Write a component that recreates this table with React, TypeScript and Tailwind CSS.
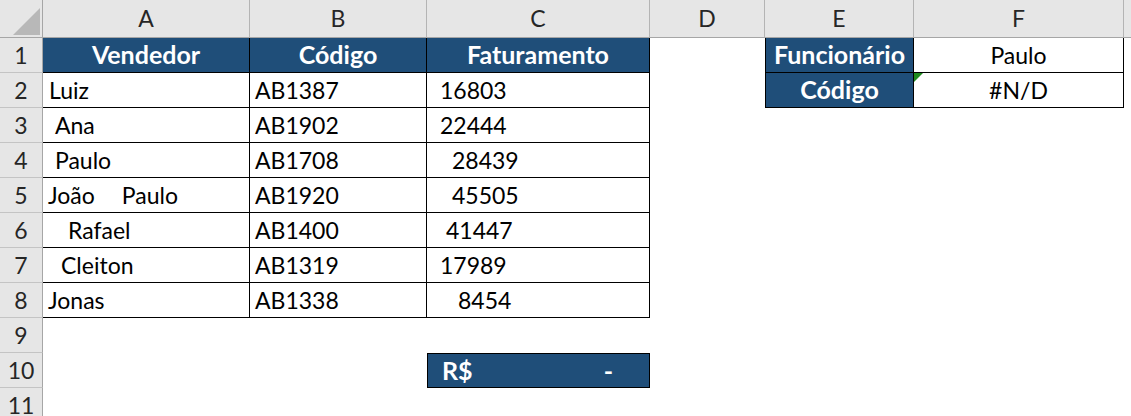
import React from 'react';

const FONT = "font-['Lato',_'Open_Sans',_sans-serif]";

const sellers = [
    { name: 'Luiz', namePad: 'pl-[6px]', code: 'AB1387', value: '16803', valuePad: 'pl-[13px]' },
    { name: 'Ana', namePad: 'pl-[12px]', code: 'AB1902', value: '22444', valuePad: 'pl-[13px]' },
    { name: 'Paulo', namePad: 'pl-[12px]', code: 'AB1708', value: '28439', valuePad: 'pl-[25px]' },
    { name: 'João Paulo', namePad: 'pl-[5px]', code: 'AB1920', value: '45505', valuePad: 'pl-[25px]' },
    { name: 'Rafael', namePad: 'pl-[25px]', code: 'AB1400', value: '41447', valuePad: 'pl-[19px]' },
    { name: 'Cleiton', namePad: 'pl-[18px]', code: 'AB1319', value: '17989', valuePad: 'pl-[13px]' },
    { name: 'Jonas', namePad: 'pl-[5px]', code: 'AB1338', value: '8454', valuePad: 'pl-[31px]' },
];

const letters = ['A', 'B', 'C', 'D', 'E', 'F'];

/** Gray column header strip cell */
function ColHead({ label }: { label: string }) {
    return (
        <div className="flex items-center justify-center bg-[#e6e6e6] border-b border-b-[#a6a6a6] border-r border-r-[#b4b4b4] text-[23px] text-[#262626]">
            {label}
        </div>
    );
}

/** Row number on the left */
function RowHead({ n }: { n: number }) {
    return (
        <div className="flex items-center justify-center bg-[#e6e6e6] border-r border-r-[#a6a6a6] border-b border-b-[#c4c4c4] text-[23px] text-[#262626]">
            {n}
        </div>
    );
}

function Blank() {
    return <div />;
}

const headCell = 'flex items-center justify-center bg-[#1f4e79] border-r border-b border-black text-[25px] font-bold text-white';

export default function App() {
    return (
        <div className={`w-[1131px] h-[416px] overflow-hidden bg-white ${FONT}`}>
            <div className="grid grid-cols-[43px_207px_177px_223px_115px_149px_210px_1fr] grid-rows-[38px_repeat(11,35px)]">

                {/* Column header strip */}
                <div className="relative bg-[#e6e6e6] border-b border-b-[#a6a6a6] border-r border-r-[#a6a6a6]">
                    <svg className="absolute left-[13px] top-[8px]" width="27" height="27" viewBox="0 0 27 27">
                        <polygon points="27,0 27,27 0,27" fill="#b8b8b8" />
                    </svg>
                </div>
                {letters.map((l) => (
                    <ColHead key={l} label={l} />
                ))}
                <div className="bg-[#e6e6e6] border-b border-b-[#a6a6a6]" />

                {/* Row 1: headers */}
                <RowHead n={1} />
                <div className={headCell}>Vendedor</div>
                <div className={headCell}>Código</div>
                <div className={headCell}>Faturamento</div>
                <Blank />
                <div className={`${headCell} border-l`}>Funcionário</div>
                <div className="flex items-center justify-center border-r border-b border-black text-[23px] text-black">
                    Paulo
                </div>
                <Blank />

                {/* Rows 2-8 */}
                {sellers.map((s, i) => (
                    <React.Fragment key={s.code}>
                        <RowHead n={i + 2} />
                        <div className={`flex items-center border-r border-b border-black text-[23px] text-black ${s.namePad}`}>
                            {s.name === 'João Paulo' ? (
                                <>
                                    <span>João</span>
                                    <span className="ml-[27px]">Paulo</span>
                                </>
                            ) : (
                                s.name
                            )}
                        </div>
                        <div className="flex items-center border-r border-b border-black pl-[5px] text-[23px] text-black">
                            {s.code}
                        </div>
                        <div className={`flex items-center border-r border-b border-black text-[23px] text-black ${s.valuePad}`}>
                            {s.value}
                        </div>
                        <Blank />
                        {i === 0 ? (
                            <>
                                <div className={`${headCell} border-l`}>Código</div>
                                <div className="relative flex items-center justify-center border-r border-b border-black text-[23px] text-black">
                                    <svg className="absolute left-0 top-0" width="9" height="9" viewBox="0 0 9 9">
                                        <polygon points="0,0 9,0 0,9" fill="#1e8a1e" />
                                    </svg>
                                    #N/D
                                </div>
                            </>
                        ) : (
                            <>
                                <Blank />
                                <Blank />
                            </>
                        )}
                        <Blank />
                    </React.Fragment>
                ))}

                {/* Row 9 */}
                <RowHead n={9} />
                <Blank />
                <Blank />
                <Blank />
                <Blank />
                <Blank />
                <Blank />
                <Blank />

                {/* Row 10: total */}
                <RowHead n={10} />
                <Blank />
                <Blank />
                <div className="flex items-center justify-between bg-[#1f4e79] border border-black pl-[14px] pr-[36px] text-[25px] font-bold text-white">
                    <span>R$</span>
                    <span>-</span>
                </div>
                <Blank />
                <Blank />
                <Blank />
                <Blank />

                {/* Row 11 */}
                <RowHead n={11} />
            </div>
        </div>
    );
}
